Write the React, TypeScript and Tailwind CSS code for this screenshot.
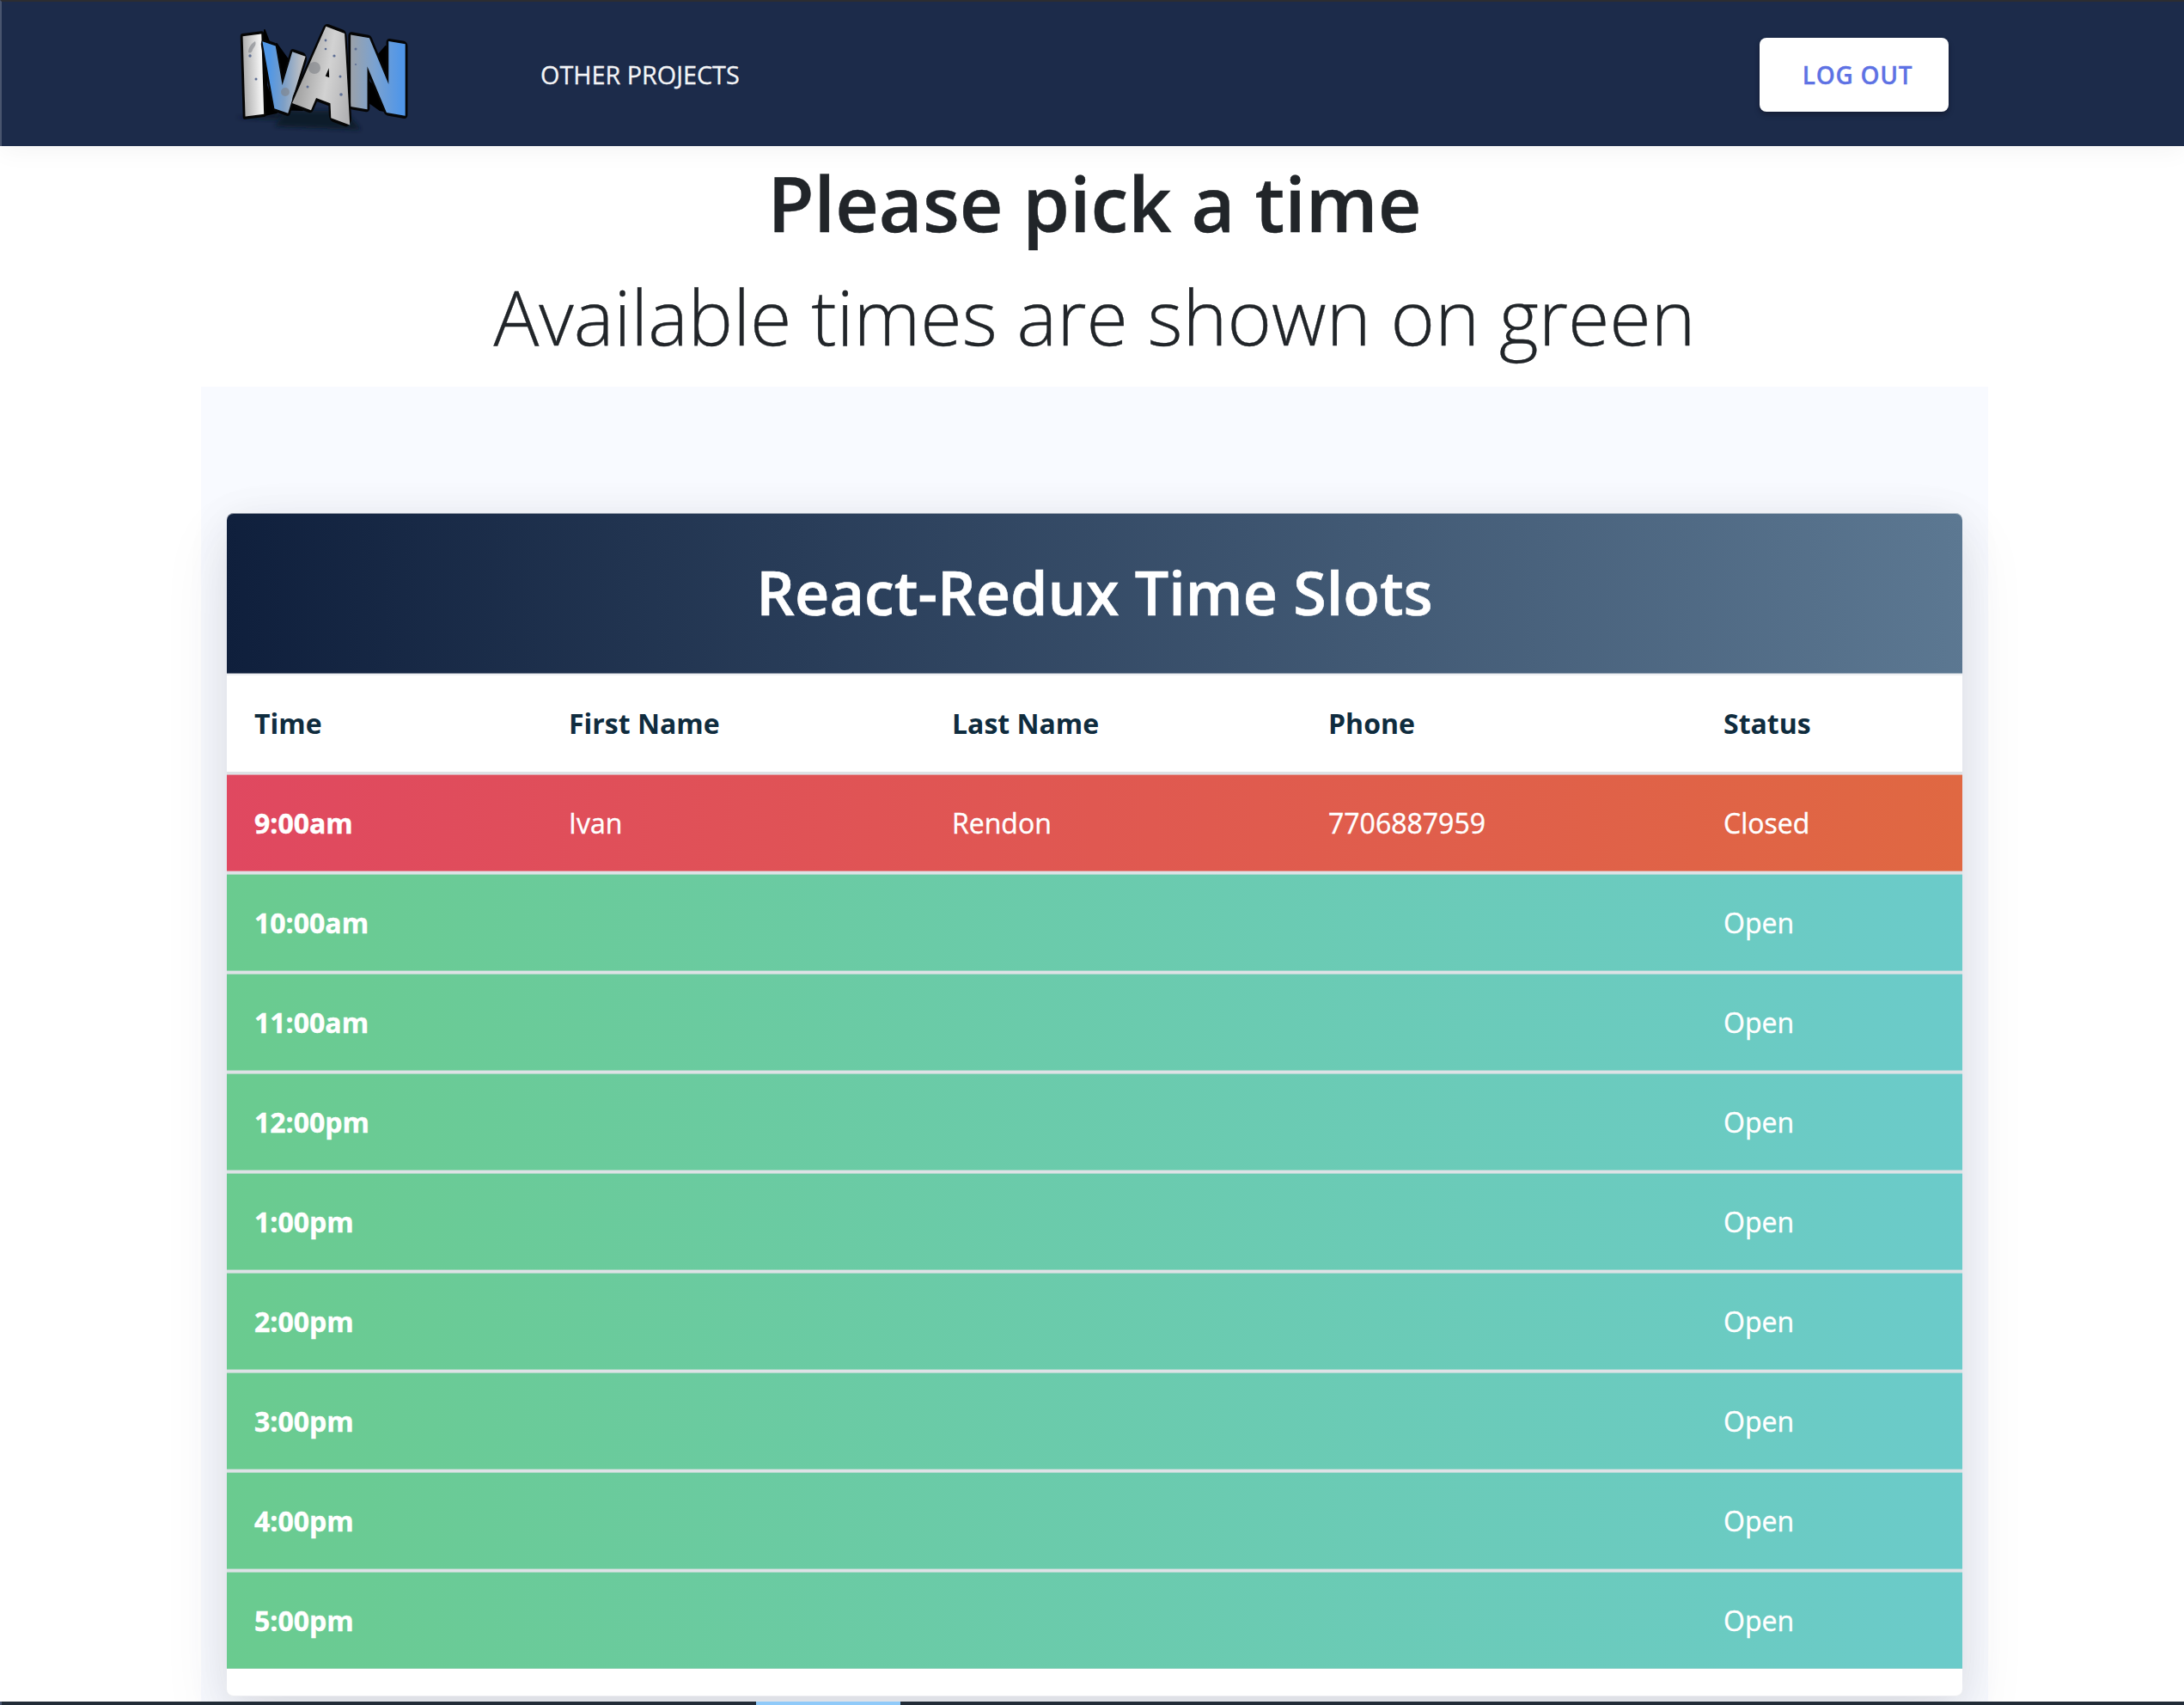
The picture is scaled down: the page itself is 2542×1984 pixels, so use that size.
const slots = [
  { time: "9:00am", first: "Ivan", last: "Rendon", phone: "7706887959", open: false },
  { time: "10:00am", open: true },
  { time: "11:00am", open: true },
  { time: "12:00pm", open: true },
  { time: "1:00pm", open: true },
  { time: "2:00pm", open: true },
  { time: "3:00pm", open: true },
  { time: "4:00pm", open: true },
  { time: "5:00pm", open: true },
];

const columns = "grid grid-cols-[366px_446px_438px_460px_310px] items-center *:pl-8";

function Logo() {
  return (
    <svg
      width="240"
      height="168"
      viewBox="0 2 240 168"
      className="shrink-0 overflow-visible"
      fontFamily="DejaVu Sans"
      fontWeight="700"
      fontSize="100"
    >
      <defs>
        <linearGradient id="stone" x1="0" y1="0" x2="1" y2="0">
          <stop offset="0" stopColor="#a5a5a5" />
          <stop offset="0.5" stopColor="#d2d2d2" />
          <stop offset="1" stopColor="#b2b2b4" />
        </linearGradient>
        <linearGradient id="pale" x1="0" y1="0" x2="1" y2="0">
          <stop offset="0.2" stopColor="#a8a8a8" />
          <stop offset="0.7" stopColor="#f2f2f2" />
        </linearGradient>
        <linearGradient id="blueToStone" x1="0" y1="0" x2="1" y2="0">
          <stop offset="0.15" stopColor="#5097e6" />
          <stop offset="0.55" stopColor="#7d9fc6" />
          <stop offset="1" stopColor="#c2c2c4" />
        </linearGradient>
        <linearGradient id="stoneToBlue" x1="0" y1="0" x2="1" y2="0">
          <stop offset="0.1" stopColor="#9aa1aa" />
          <stop offset="0.45" stopColor="#7ba2d0" />
          <stop offset="0.85" stopColor="#5096e8" />
        </linearGradient>
        <filter id="soft" x="-20%" y="-50%" width="140%" height="200%">
          <feGaussianBlur stdDeviation="2.5" />
        </filter>
      </defs>
      <path d="M14 136L62 130L100 134L60 138Z" fill="#101a2c" filter="url(#soft)" />
      <path d="M72 128H142L160 150L60 146Z" fill="#101a2c" filter="url(#soft)" />
      <g fill="#000" stroke="#000" strokeWidth="2" strokeLinejoin="round">
        <path d="M48 34L54 50L50 98L62 130L43 134Z" />
        <path d="M62 50L75 68L69 95Z" />
        <path d="M57 126L75 124L84 112L92 127Z" />
        <path d="M167 92L168 117L182 127L212 133Z" />
        <path d="M176 68L189 53V84Z" />
      </g>
      <g strokeLinejoin="round">
        <text transform="matrix(1.15 -0.15 0.04 1.28 15 136)" fill="url(#pale)" stroke="#050505" strokeWidth="5" paintOrder="stroke">I</text>
        <g transform="matrix(0.58 0.2 -0.04 0.9 45 117)">
          <text fill="#050505" stroke="#050505" strokeWidth="15">V</text>
          <text fill="url(#blueToStone)" stroke="url(#blueToStone)" strokeWidth="7" strokeLinejoin="miter">V</text>
        </g>
        <g transform="matrix(0.93 0.16 0 1.1 141 120)">
          <text fill="#050505" stroke="#050505" strokeWidth="9">N</text>
          <text fill="url(#stoneToBlue)" stroke="url(#stoneToBlue)" strokeWidth="3" strokeLinejoin="miter">N</text>
        </g>
        <g transform="matrix(0.74 0.28 -0.2 1.18 86 115)">
          <text fill="#050505" stroke="#050505" strokeWidth="16">A</text>
          <text fill="url(#stone)" stroke="url(#stone)" strokeWidth="10" strokeLinejoin="miter">A</text>
        </g>
      </g>
      <g fill="#7f8288" opacity="0.6">
        <circle cx="106" cy="78" r="7" />
        <circle cx="72" cy="106" r="5" />
        <path d="M29 60C29 55 32 50 37 47C39 52 35 54 34 57C33 60 32 61 29 60Z" />
      </g>
      <g fill="#5d6e94">
        <circle cx="119" cy="46" r="1.4" />
        <circle cx="119" cy="56" r="1.3" />
        <circle cx="129" cy="64" r="1.6" />
        <circle cx="137" cy="109" r="1.8" />
        <circle cx="136" cy="88" r="1.5" />
        <circle cx="98" cy="100" r="1.5" />
        <circle cx="31" cy="64" r="1.7" />
        <circle cx="38" cy="91" r="1.5" />
        <circle cx="154" cy="56" r="1.5" />
        <circle cx="154" cy="74" r="1.1" />
      </g>
    </svg>
  );
}

export default function App() {
  return (
    <div className="flex h-[1984px] w-[2542px] flex-col overflow-hidden bg-white font-['Open_Sans',sans-serif]">
      <header className="relative h-[170px] shrink-0 border-t-2 border-l-2 border-t-[#2c2d31] border-l-[#49556e] bg-[#1c2b4a] shadow-[0_4px_28px_rgba(0,0,0,0.05)]">
        <div className="flex h-[168px] items-center pt-[2px] pr-[274px] pl-[258px]">
          <Logo />
          <a className="ml-[129px] text-[28.8px] leading-[40px] text-[#f4f5f7] [-webkit-text-stroke:0.3px]">OTHER PROJECTS</a>
          <button className="ml-auto h-[86px] w-[220px] rounded-lg bg-white pl-[8px] text-[28px] font-semibold tracking-[0.7px] text-[#5e72e4] shadow-[0_4px_6px_rgba(20,20,40,0.3),0_2px_4px_rgba(0,0,0,0.2)] [-webkit-text-stroke:0.3px]">
            LOG OUT
          </button>
        </div>
      </header>

      <main className="flex h-[1810px] shrink-0 flex-col items-center overflow-hidden">
        <div className="ml-[6px] flex h-[280px] w-[2080px] shrink-0 flex-col items-center text-[#212529] [-webkit-text-stroke:0.4px]">
          <h1 className="text-[88px] leading-[132px] font-semibold">Please pick a time</h1>
          <h2 className="text-[88px] leading-[132px] font-light">Available times are shown on green</h2>
        </div>
        <section className="ml-[6px] h-[1530px] w-[2080px] shrink-0 bg-[#f8faff] px-[30px] pt-[147px]">
          <div className="h-[1377px] overflow-visible rounded-lg border-b border-[#eeeef1] bg-white shadow-[0_30px_80px_rgba(50,50,80,0.09),0_10px_50px_rgba(0,0,0,0.08)]">
            <div className="flex h-[187px] items-center justify-center rounded-t-lg bg-[linear-gradient(87deg,#0f1f3c,#5c7892)] pb-[4px] shadow-[inset_0_1px_0_rgba(255,255,255,0.5),inset_0_-1px_0_rgba(255,255,255,0.4)]">
              <h3 className="text-[70px] leading-[90px] font-semibold text-white [-webkit-text-stroke:0.6px]">React-Redux Time Slots</h3>
            </div>
            <div className={`${columns} h-[117px] border-t-2 border-b-3 border-t-[#eff0f3] border-b-[#dee2e6] text-[32px] font-bold text-[#0f2c3e]`}>
              <span>Time</span>
              <span>First Name</span>
              <span>Last Name</span>
              <span>Phone</span>
              <span>Status</span>
            </div>
            <div className="flex flex-col gap-[3px] bg-[#dee2e6]">
              {slots.map((s) => (
                <div
                  key={s.time}
                  className={`${columns} h-[113px] text-[32px] text-white shadow-[inset_0_1px_0_rgba(222,226,230,0.6),inset_0_-1px_0_rgba(222,226,230,0.4)] [-webkit-text-stroke:0.4px] ${
                    s.open
                      ? "bg-[linear-gradient(87deg,#6acb8f,#6bcbca)]"
                      : "bg-[linear-gradient(87deg,#e04860,#e06842)]"
                  }`}
                >
                  <span className="font-bold">{s.time}</span>
                  <span>{s.first}</span>
                  <span>{s.last}</span>
                  <span>{s.phone}</span>
                  <span>{s.open ? "Open" : "Closed"}</span>
                </div>
              ))}
            </div>
          </div>
        </section>
      </main>

      <footer className="flex h-1 shrink-0 border-l-2 border-[#49556e] bg-[#222c37]">
        <div className="ml-[878px] h-1 w-[168px] bg-[#90caf9]" />
      </footer>
    </div>
  );
}
